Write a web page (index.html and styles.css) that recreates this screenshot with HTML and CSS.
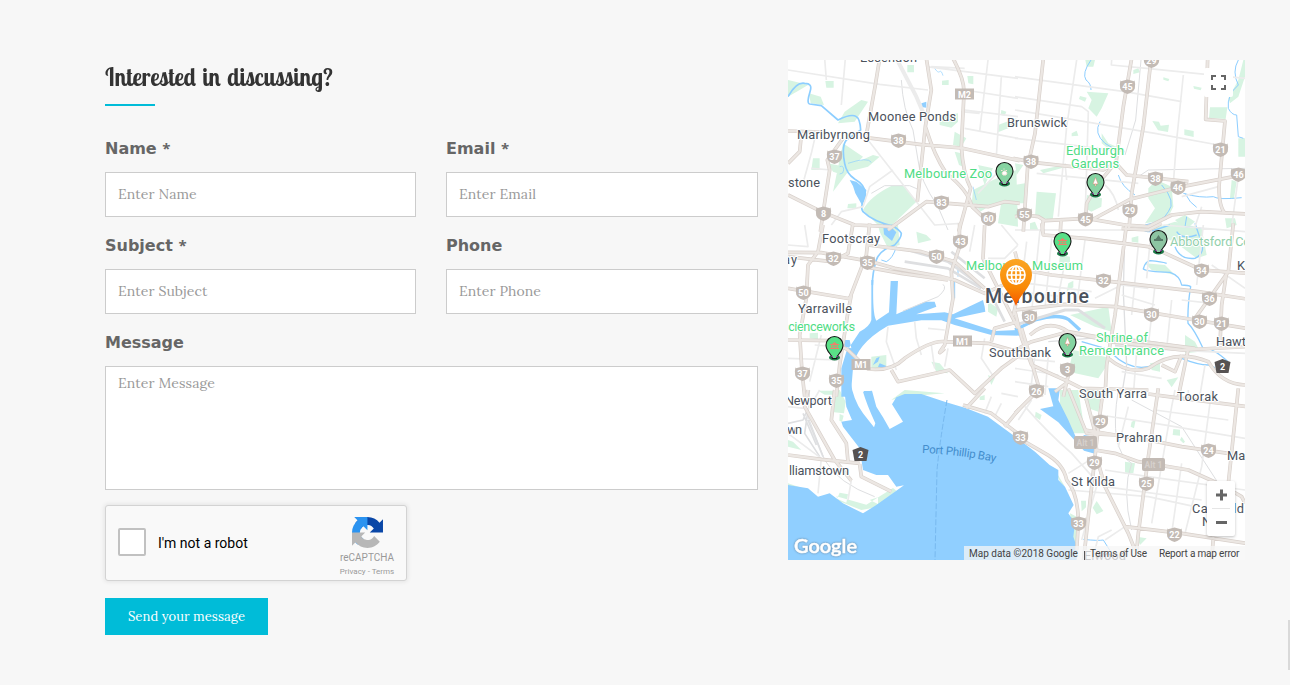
FILE: index.html
```html
<!DOCTYPE html>
<html lang="en">
<head>
<meta charset="utf-8">
<title>Contact</title>
<link rel="stylesheet" href="styles.css">
</head>
<body>
<main class="contact">
<form class="form">
  <h2 class="title"><span class="title-text">Interested in discussing?</span></h2>
  <div class="grid">
    <div class="field"><label for="name">Name <span class="star">*</span></label><input id="name" placeholder="Enter Name"></div>
    <div class="field"><label for="email">Email <span class="star">*</span></label><input id="email" placeholder="Enter Email"></div>
    <div class="field"><label for="subject">Subject <span class="star">*</span></label><input id="subject" placeholder="Enter Subject"></div>
    <div class="field"><label for="phone">Phone</label><input id="phone" placeholder="Enter Phone"></div>
    <div class="field wide"><label for="message">Message</label><textarea id="message" placeholder="Enter Message"></textarea></div>
  </div>
  <div class="captcha">
    <span class="check"></span>
    <span class="robot">I'm not a robot</span>
    <div class="brand">
      <svg width="31" height="31" viewBox="0 0 64 64">
        <path fill="#0a47a7" d="M64 31.955l-.033-1.370V4.687l-7.160 7.160C50.948 4.674 42.033.093 32.050.093c-10.400 0-19.622 4.960-25.458 12.640l11.736 11.860a15.550 15.550 0 0 1 4.754-5.334c2.050-1.600 4.952-2.906 8.968-2.906.485 0 .860.057 1.135.163 4.976.393 9.288 3.140 11.828 7.124l-8.307 8.307L64 31.953"/>
        <path fill="#2b93f0" d="M31.862.094l-1.370.033H4.594l7.160 7.160C4.580 13.147 0 22.060 0 32.046c0 10.400 4.960 19.622 12.640 25.458L24.500 45.768a15.550 15.550 0 0 1-5.334-4.754c-1.600-2.050-2.906-4.952-2.906-8.968 0-.485.057-.860.163-1.135.393-4.976 3.140-9.288 7.124-11.828l8.307 8.307L31.860.095"/>
        <path fill="#b7b7b7" d="M0 32.045v27.268l7.194-7.160c5.860 7.173 14.774 11.754 24.760 11.754 10.400 0 19.622-4.960 25.458-12.640l-11.736-11.860a15.550 15.550 0 0 1-4.754 5.334c-2.050 1.600-4.952 2.906-8.968 2.906-.485 0-.860-.057-1.135-.163-4.976-.393-9.288-3.140-11.828-7.124l8.307-8.307c-10.522.040-22.400.066-27.295-.005"/>
      </svg>
      <span class="brand-name">reCAPTCHA</span>
      <span class="brand-links">Privacy - Terms</span>
    </div>
  </div>
  <button class="send" type="button">Send your message</button>
</form>

<section class="map">
<svg class="map-art" width="457" height="500" viewBox="0 0 1371 1500">
<defs>
  <path id="shield" d="M-6.5-5.2 0-7 6.5-5.2 7-6.3Q8.3-2 7.3 2 6 5.5 0 7.5-6 5.5-7.3 2-8.3-2-7-6.3z"/>
  <path id="pent" d="M0-7.5 8-4.5 6 6.5H-6L-8-4.5z"/>
  <g id="pin"><ellipse cx="0" cy="8.500" rx="5.500" ry="3" fill="#1c7a48"/><path d="M-2 9.500C-2.500 5-8.500 3-8.500-4a8.500 8.500 0 0 1 17 0C8.500 3 2.500 5 2 9.500z" stroke="#151515" stroke-width="1.100"/><circle cx="-2.500" cy="7.500" r=".7" fill="#c23fd0"/><circle cx="2.500" cy="7.500" r=".7" fill="#c23fd0"/></g>
  <linearGradient id="orange" x1="0" y1="0" x2="0" y2="1"><stop offset="0" stop-color="#fba524"/><stop offset=".6" stop-color="#f98a06"/><stop offset="1" stop-color="#f55600"/></linearGradient>
  <g id="r1">
    <path d="M495-5Q530 60 528 100L520 260Q525 340 548 385L512 515"/>
    <path d="M275-5 262 75 235 225M0 213 100 216M235 233 400 254 520 264 695 302M415-5 430 90 412 200 388 425M412 200Q440 290 475 340 540 390 552 440L610 495M300 510 415 425 600 440 650 425 695 430M165 235 118 300 125 330 105 460 97 515M0 405 100 455 200 495 310 500M40 225 35 275 0 310"/>
  </g>
  <g id="r2">
    <path d="M85-5 60 220 38 320 25 515M-5 295 60 308 265 330 300 310M350-5 325 140 303 310 335 345 520 365M408 0 385 200 350 400 342 510M300 310 250 370 215 430 212 480M230 480 345 418 490 382 695 342M578-5 572 178 630 183 612 380Q612 440 630 460M0 470 30 465 70 470 90 482 215 475 330 495 400 500 470 465 560 455 695 462M85 480 82 515M138 480 136 515"/>
  </g>
  <g id="r3">
    <path d="M0 82 100 83 250 110 320 130 460 155 500 165 590 205 690 160M105 0 90 80 60 120 55 220 35 330 42 440 50 515M195-5 180 85 130 110 0 95M0 190 190 222M190 210 180 260 155 420 145 515M245-5 235 90 185 220M515-5 513 70 490 140 495 220 470 360Q440 400 470 370M0 345 130 347 180 375 240 432Q310 440 350 400 430 345 470 350L600 355 690 380M310 435 330 470 485 435 560 505 640 430 695 390M240 60 400 80 500 110 590 190M590 0 585 100 690 310M690 290 620 310 610 350M245 128 340 145 480 165"/>
  </g>
  <g id="r4">
    <path d="M80-5 85 30 210 40 400 65 440 80 560 135 695 145M0 130 110 150 310 172 550 200 695 222M335-5 315 150 300 270 275 420 270 515M0 255 150 238 300 245 540 285 695 310M655-5 640 140 540 280M635 140 620 240 615 360M0 80 20 160-5 270M0 260 20 340 50 420 160 470 200 490 400 495M45 330Q100 280 160 320L290 350 500 375 695 365M0 375 50 350 160 320 270 340 380 350 540 370M280 400Q340 450 400 430 480 370 580 410 620 480 695 480M440 420 480 440 500 390M520 370 490 515M160 450 145 515M20 310 80 515M160 470 120 500M320 10 400 15 440-5"/>
  </g>
  <g id="r5">
    <path d="M60 0 50 50 140 210 190 272M140 0 130 90 175 160 180 215M0 195 100 208 215 220M215 222 220 260 310 305M590-5 535 55M525 45 610 70 695 135M650 110 695 55"/>
  </g>
  <g id="r6">
    <path d="M0 70 60 10M-5 135 90 190Q145 220 155 270 190 310 190 400L185 480M265-5 250 110 240 200 205 515M205-5 240 125 245 185M160-5 215 130 300 135 400 150 500 170 640 190M240 180 300 190 370 215 520 240 620 285 680 320 690 340M430-5 400 200 370 430 365 480M250 220 270 290 340 430 360 480M330 410 500 430 695 460M400 12 500 25 695 50M670-5 640 280M595 440 590 515M210 120 300 135"/>
  </g>
</defs>
<rect width="1371" height="1500" fill="#fff"/>

<g class="park">
  <path d="M0 60 35 68 60 75 35 90 0 110zM63 100l35 10 10 25-40-5zM112 63h25v20h-22zM150 190l50-5 40-60-20-5-50 35zM165 250l60 40-15 15 45-20 20 5-35 30-60 15-45 60zM75 295h20v35H70zM180 432l25-2v15h-27zM225 450Q245 410 310 378L350 378 385 425 310 497 270 495zM358 15h20v22h-20zM462 62l20-2v15h-20zM538 48h18v25l-15-3zM455 170l55-10v25l-20 18-35-8zM500 215l35 20-15 25-25-5zM640 150l15 5-5 12-12-2zM630 195l55-20v20l-55 22zM570 315l45 10-25 50-10-30zM555 390l60-30 70-30 5 170-60-10 10-65-40 15-30 20-20-15zM120 310l50 10-5 25-30-10zM500 275l20 5 5 40-12-5z"/>
  <g transform="translate(681)"><path d="M210-5 240 0 235 20 215 20zM195 108l20 5-5 12-18-8zM215 95l65 5-20 45-15 25-25-25 10-25zM170 220l15-8 5 15-20 2zM260 220l20 30 25 10-20 10-25-20zM355 30l15-5 5 12-20 5zM445 52l18 5-3 7-15-5zM535 78l25 5-3 8-20-5zM412 183l20 2 5 12 25-3-3 22-30-5zM508 208l28 5v18l-28-6zM585 142h52l-5 35-50-3zM640 115l30-55 15-60h10v35l-25 75-25 20zM670 235h20v55h-20zM650 360l15 5-8 50-12 0zM400 385l25-25 45 20 5 60-20 40-65 10 30-45-20-30zM480 480l30-15 30 20-30 25zM216 405l45 10-2 25-30 15-18-10zM65 395l58 5-10 80-53-10zM0 310l25 5-20 30zM0 375l30-5v60H0zM45 490l15-5 10 25H45zM75 330l70-15 10 5-70 20zM630 475h30l5 20-30 10z"/></g>
  <g transform="translate(0 495)"><path d="M270 0 330 0 335 60 300 70 275 20zM385 20l30 10 15 15-40 10zM600 230l30 20-5 25-25-15zM65 325l25-2v20l-25-3zM430 410l25 5 25 30-35-5zM90 497h60v12h-40zM250 395l45-5v40l-45 5zM600 450l20 10-10 20z"/></g>
  <g transform="translate(681 495)"><path d="M165 270 280 245 290 320 240 305zM135 90l30 5v35h-35zM175 375 290 400 250 460 160 440zM160 175l15-8v20l-20 12zM400 15l80-25 80 20 15 80-30 10-60-45zM350 38l20-5v20l-20-3zM390 115l60 5 30 30-70-15zM510 330l30 20 15 30-45 5zM405 415l30-5v30l-25-5zM455 465l35-8-20 30z"/></g>
  <g transform="translate(0 990)"><path d="M140 0h15l18 35-5 35-30-3zM155 72l12 5-5 18-8-3zM310 30 350 0 470 10 350 20zM0 280l60 20 10 20-70-20zM155 308l25 5-5 25-28-12zM150 332l70 28 45-8 60-50-10-8-80 50-90-25zM245 330l25-8v20zM575 20l15-5v15h-15zM0 150l15 5 25 25-40-10z"/></g>
  <g transform="translate(681 990)"><path d="M135 0h55l20 130-40 0-35-70zM195 0h65l-10 65-30-10zM350 95l12-5-5 25-10-5zM475 117l20 2v18l-22-2zM500 140l10 15-5 5-10-10zM330 215l30 5-5 30-25-2zM245 333l20 30-20 10-12-20zM198 332h15v20l-13 12zM365 440l30 5-20 20zM62 65l18 10-5 15-15-10zM120 240l30 50-15-15zM165 370l15 130h10l-5-120z"/></g>
</g>

<g class="water">
  <path d="M185 360 205 365 235 390 232 415 222 435 202 400 195 378z M400 130l15-5v18l-15-2z"/>
  <path transform="translate(0 495)" d="M285-5 303 0 325 22 312 48 288 28z M250 165 250 285Q245 305 215 320L175 380 160 430V515H188L195 430Q200 360 300 302L400 286H460L500 300 610 330 695 332V315L620 318 500 280 592 260 590 245 500 272 590 245 585 225 495 268 470 262 385 268 445 245 440 230 410 230 325 268 330 168H308L303 262 265 287Q253 270 256 165zM265 400l10-5-5 15-15 10zM275 415l20 8-5 10-20-8zM165 345l20 0 5 25-20-5zM228 498h24v12h-24z"/>
  <path transform="translate(0 990)" d="M165-30H187Q195 30 225 70L258 112 262 100Q235 40 225 5L252 2 265 50 285 82 305 117 345 95 312 43 325 22 350 12 400 12 470 35 535 55 600 80 695 150 741 185 785 225 811 240 811 270 831 290 857 345 841 370 861 400 856 440 866 470 866 515H0V285L60 295 90 320 125 310 165 340 225 370 265 345 348 286 325 290 300 255 265 255 225 240 215 175 165 110 160 95 178 92 192 90 175 50z"/>
  <path transform="translate(681 990)" d="M100-5h35l-5 35 30 60 22 50 20 2 5-7 30 5 5 52-35-10-77-85-55-40 40-8z"/>
</g>
<g class="river">
  <path stroke-width="5" d="M0 110Q25 65 50 70 75 70 66 95 55 130 65 132L100 137 150 180Q190 160 205 170 216 175 218 210L175 240Q160 260 170 310 175 340 200 357 240 380 230 415 215 440 225 455 255 485 320 500"/>
  <path stroke-width="2" d="M440 25q10 15 15 10t10 12M180 310q60-20 70-3M155 320q12-5 12 10 0 12-12 12M555 380l10 40"/>
  <g transform="translate(681)"><path stroke-width="3" d="M228 0q-28 40-15 60 15 10 15 30M255 185q-20 35 15 65l25 15M310 345q10 35 50 60M440 375q45 50 20 80-15 30-70 40M640 145q-5-40 30-70-20-40 0-75M640 145q10 20 25 20l5 65 15 5M510 400q15 30 35 42M505 400q50 15 90 10 15 10 85 3M515 470l-5 30 50 5"/></g>
  <g transform="translate(0 495)"><path stroke-width="5" d="M310 0q25 15 30 25 0 15-20 35-45 15-55 45-12 40-12 75"/><path stroke-width="3" d="M325 65q-10 35-30 45l-15-5M510 130v25M500 170v50"/></g>
  <g transform="translate(681 495)"><path stroke-width="4" d="M395 0q-20 20 10 20l60-20M485 20q15 25 60 10M480 65q15 40 60 35 30-15 20-45l-20-60M455 115q-15-5-50-8-15 3-20 25 10 8 80 10 30 10 35 38 20 0 27 5-10 60-8 110 20 20 45 75 25-5 75 40"/><path stroke-width="10" d="M0 315 60 285Q130 265 160 283L195 315"/><path stroke-width="4" d="M200 350 270 370M290 385q60 60 130 35M500 400q50 20 80 20l20 8"/></g>
  <g transform="translate(681 990)"><path stroke-width="3" d="M205 448q45 5 60 2l20 32"/></g>
</g>

<g class="rail">
  <path d="M340 60Q345 150 375 210L390 300Q395 360 450 440L480 510M250 400 290 377H365L395 390"/>
  <g transform="translate(681)"><path d="M378 0 362 180 330 285M370 350 400 330 690 325"/></g>
  <g transform="translate(0 495)"><path d="M345 258 450 215Q480 190 465 178"/><path stroke-width="8" d="M360 75 480 110 590 190M350 110 480 130 580 190M490 80 590 160M600 190 650 290"/></g>
  <g transform="translate(681 495)"><path stroke-width="9" d="M0 300 150 255 190 255 270 310M180 330 320 340 500 365M300 360 520 375"/><path stroke-width="4" d="M330 0 325 200 335 420 320 510M100 350 290 335"/></g>
  <g transform="translate(0 990)"><path d="M65 0 60 80 110 210Q150 280 260 320"/><path stroke-width="5" d="M45 70 85 165M60 60 50 130 95 200M0 100 45 90 60 55M60 90 105 200"/></g>
  <g transform="translate(681 990)"><path d="M310 0Q280 180 350 220 320 300 350 420M350 30 500 110 610 280"/></g>
</g>

<g class="minor">
  <path d="M0 30 275 73 420 90M110-5 115 60M172-5 160 135M415 20 690 55M530 90 690 115M530 150 690 170M530 205 690 235M600 0 575 215M640 50 625 290M240 240 440 495 520 490M315 330 245 380 225 440 160 455 130 495M85 215 70 280 45 370M70 325 130 330M430 20 530 25M575 160 520 155M570 400 640 325M560 430 600 495"/><path stroke-width="12" d="M325-5 385 110 415 180"/>
  <g transform="translate(681)"><path d="M0 50 330 95 500 125M0 110 200 140 220 155 210 480M0 150 420 220 610 255M0 235 330 275M185 0 155 200 130 470M290 0 289 15 395 25 690 55M505 45 485 240 475 370M65 340 370 370M270 375Q300 400 310 450M150 310 155 360M610 380 500 410M0 510 400 510M670 350 650 500M560 440 540 500"/></g>
  <g transform="translate(0 495)"><path d="M300 305 295 350 325 435M380 290 385 340 400 390M0 60 60 65 50 0M80 360 150 365M60 115 50 210M0 400 150 405M65 470 100 330M480 370 470 425M430 360 440 430M590 340 580 400 620 460M690 60 650 100 600 100M640 0 690 60M560 0 545 80M420 310 470 315"/></g>
  <g transform="translate(681 495)"><path d="M35 50 20 170M75 15 50 260M110 40 90 250M150 110 125 240M210 45 185 240M370 60 350 270M410 0 395 160M470 225 455 370M420 180 400 360M240 220 320 180 400 190M0 200 140 215M0 170 230 200M320 210 420 240M565 0 545 180M500 225 590 235M270 350 370 370 690 385M10 400 120 410M0 430 130 450M0 470 100 485M60 390 45 510M100 390 90 510M320 440 440 460M570 420 555 510M365 380 355 510M590 120 690 190M445 0 690 20"/></g>
  <g transform="translate(0 990)"><path d="M0 130 100 205 90 310M95 0 60 60M190 270 180 330M0 50 50 55M610 20 590 70M640 40 620 80M690 20 640 10"/></g>
  <g transform="translate(681 990)"><path d="M30 50Q100 130 170 190L250 280M160 250 240 200M255 75 420 100 690 145M270 240 400 260 690 300M270 290 560 330M160 300 400 320 540 350M340 50 310 170M480 0 470 50 410 400M590 0 560 230 510 430M250 270 200 450M290 420 250 440 235 500M330 410 270 450M420 60 640 90M500 220 470 430M50 30 10 90M440 20 520 25 520 0"/></g>
</g>

<g class="edge"><use href="#r1"/><use href="#r2" x="681"/><use href="#r3" y="495"/><use href="#r4" x="681" y="495"/><use href="#r5" y="990"/><use href="#r6" x="681" y="990"/></g>
<g class="core"><use href="#r1"/><use href="#r2" x="681"/><use href="#r3" y="495"/><use href="#r4" x="681" y="495"/><use href="#r5" y="990"/><use href="#r6" x="681" y="990"/></g>

<g transform="scale(3) translate(-788 -60)">
  <path d="M947 400Q940 440 937 470L935 560" fill="none" stroke="#78b9ef" stroke-dasharray="6 2"/>
  <g class="shields">
    <g transform="translate(898.500 140.500)"><use href="#shield"/><text y="3.500">38</text></g>
    <g transform="translate(834.500 156.500)"><use href="#shield"/><text y="3.500">37</text></g>
    <g transform="translate(823.500 213.500)"><use href="#shield"/><text y="3.500">8</text></g>
    <g transform="translate(941.500 202.500)"><use href="#shield"/><text y="3.500">83</text></g>
    <g transform="translate(988.500 218.500)"><use href="#shield"/><text y="3.500">60</text></g>
    <g transform="translate(1127.500 86.500)"><use href="#shield"/><text y="3.500">45</text></g>
    <g transform="translate(1151.500 60.500)"><use href="#shield"/><text y="3.500">29</text></g>
    <g transform="translate(1031 161.500)"><use href="#shield"/><text y="3.500">38</text></g>
    <g transform="translate(1220.500 149.500)"><use href="#shield"/><text y="3.500">21</text></g>
    <g transform="translate(1155.500 178.500)"><use href="#shield"/><text y="3.500">38</text></g>
    <g transform="translate(1178 187.500)"><use href="#shield"/><text y="3.500">46</text></g>
    <g transform="translate(1238.500 174.500)"><use href="#shield"/><text y="3.500">46</text></g>
    <g transform="translate(1024.500 214.500)"><use href="#shield"/><text y="3.500">55</text></g>
    <g transform="translate(1085.500 219)"><use href="#shield"/><text y="3.500">45</text></g>
    <g transform="translate(1130 210.500)"><use href="#shield"/><text y="3.500">29</text></g>
    <g transform="translate(833.500 258.500)"><use href="#shield"/><text y="3.500">32</text></g>
    <g transform="translate(867.500 262.500)"><use href="#shield"/><text y="3.500">35</text></g>
    <g transform="translate(936.500 256.500)"><use href="#shield"/><text y="3.500">50</text></g>
    <g transform="translate(960.500 241.500)"><use href="#shield"/><text y="3.500">43</text></g>
    <g transform="translate(803.500 292.500)"><use href="#shield"/><text y="3.500">50</text></g>
    <g transform="translate(802.500 373.500)"><use href="#shield"/><text y="3.500">37</text></g>
    <g transform="translate(836.500 380.500)"><use href="#shield"/><text y="3.500">35</text></g>
    <g transform="translate(1103.500 280.500)"><use href="#shield"/><text y="3.500">32</text></g>
    <g transform="translate(1201.500 270.500)"><use href="#shield"/><text y="3.500">34</text></g>
    <g transform="translate(1209.500 298.500)"><use href="#shield"/><text y="3.500">36</text></g>
    <g transform="translate(1151.500 314.500)"><use href="#shield"/><text y="3.500">30</text></g>
    <g transform="translate(1199.500 321.500)"><use href="#shield"/><text y="3.500">30</text></g>
    <g transform="translate(1221.500 323.500)"><use href="#shield"/><text y="3.500">21</text></g>
    <g transform="translate(1029.500 317)"><use href="#shield"/><text y="3.500">30</text></g>
    <g transform="translate(1067.500 369.500)"><use href="#shield"/><text y="3.500">3</text></g>
    <g transform="translate(1036.500 391)"><use href="#shield"/><text y="3.500">26</text></g>
    <g transform="translate(1020.500 437.500)"><use href="#shield"/><text y="3.500">33</text></g>
    <g transform="translate(1100.500 421.500)"><use href="#shield"/><text y="3.500">29</text></g>
    <g transform="translate(1094.500 462.500)"><use href="#shield"/><text y="3.500">29</text></g>
    <g transform="translate(1208.500 450.500)"><use href="#shield"/><text y="3.500">24</text></g>
    <g transform="translate(1146.500 483.500)"><use href="#shield"/><text y="3.500">25</text></g>
    <g transform="translate(1078.500 523.500)"><use href="#shield"/><text y="3.500">33</text></g>
    <g transform="translate(1174.500 534.500)"><use href="#shield"/><text y="3.500">22</text></g>
    <g transform="translate(964.500 94)"><path d="M-9.500-5.500h19v11h-19z"/><text y="3.500">M2</text></g>
    <g transform="translate(962.500 341)"><path d="M-9.500-5.500h19v11h-19z"/><text y="3.500">M1</text></g>
    <g transform="translate(861 364.500)"><path d="M-9.500-5.500h19v11h-19z"/><text y="3.500">M1</text></g>
    <g transform="translate(1085.500 442.500)"><rect x="-11.500" y="-6.500" width="23" height="13" rx="2"/><text class="alt" y="3.500">Alt 1</text></g>
    <g transform="translate(1153.500 464.500)"><rect x="-11.500" y="-6.500" width="23" height="13" rx="2"/><text class="alt" y="3.500">Alt 1</text></g>
    <g class="dark" transform="translate(860.500 454.500)"><use href="#pent"/><text y="3">2</text></g>
    <g class="dark" transform="translate(1222.500 366.500)"><use href="#pent"/><text y="3">2</text></g>
  </g>
  <g class="place">
    <text x="860" y="62.500" textLength="57">Essendon</text>
    <text x="868" y="121.500" textLength="88">Moonee Ponds</text>
    <text x="797" y="139.500" textLength="73">Maribyrnong</text>
    <text x="788" y="187.500" textLength="32">stone</text>
    <text x="1007" y="127.500" textLength="60">Brunswick</text>
    <text x="822" y="243.500" textLength="58">Footscray</text>
    <text x="783" y="264.500" textLength="14">ay</text>
    <text x="798" y="313.500" textLength="54">Yarraville</text>
    <text x="989" y="357.500" textLength="62">Southbank</text>
    <text x="1237" y="270.500">Kew</text>
    <text x="1216" y="346.500">Hawthorn</text>
    <text x="785" y="405.500" textLength="47">Newport</text>
    <text x="787" y="434.500" textLength="15">wn</text>
    <text x="789" y="475.500" textLength="60">lliamstown</text>
    <text x="1079" y="398.500" textLength="68">South Yarra</text>
    <text x="1177" y="401.500" textLength="41">Toorak</text>
    <text x="1116" y="442.500" textLength="46">Prahran</text>
    <text x="1071" y="486.500" textLength="44">St Kilda</text>
    <text x="1227" y="460.500">Malvern</text>
    <text x="1192" y="513.500" textLength="52">Caulfield</text>
    <text x="1202" y="526.500">North</text>
    <text x="1084" y="560.500" textLength="42">Elwood</text>
    <text class="city" x="985" y="303.500" textLength="104">Melbourne</text>
  </g>
  <g class="poi">
    <text x="904" y="178.500" textLength="88">Melbourne Zoo</text>
    <text x="1066" y="155.500" textLength="58">Edinburgh</text>
    <text x="1071" y="168.500" textLength="48">Gardens</text>
    <text x="966" y="270.500" textLength="117">Melbourne Museum</text>
    <text x="782" y="331.500" textLength="73">scienceworks</text>
    <text x="1096" y="342.500" textLength="52">Shrine of</text>
    <text x="1079" y="355.500" textLength="85">Remembrance</text>
    <text class="faded" x="1170" y="246.500" textLength="111">Abbotsford Convent</text>
  </g>
  <path id="bay" d="M922 453Q965 455 999 463" fill="none"/>
  <text class="bay"><textPath href="#bay" textLength="74">Port Phillip Bay</textPath></text>

  <use href="#pin" x="1004.500" y="175" fill="#86d4a2"/><path d="M1002 173q2.500-4 5 0l-1 2h-3zM1001 170.500h1.500m1-1.500h1m1 1.500h1.500" fill="#fff" stroke="#f6e6d9"/>
  <use href="#pin" x="1095.500" y="186" fill="#86d4a2"/><path d="M1095.500 177.500l2.500 6.500h-5zM1095 184h1v2h-1z" fill="#fff" stroke="#e77b63" stroke-width=".4"/>
  <use href="#pin" x="1062.500" y="245" fill="#59e087"/><path d="M1058 241h9v-1h-2l-2.500-2-2.500 2h-2zM1059 241.500h1.500v2h-1.500zM1061.500 241.500h2v2h-2zM1064.500 241.500h1.500v2h-1.500zM1058 244h9v1h-9z" fill="#ee806b"/>
  <use href="#pin" x="1158.500" y="243" fill="#8dc5a2"/><path d="M1154 241h9v-2h-1.500l-1-1-2-3-2 3-1 1h-1.500z" fill="#587c69"/>
  <use href="#pin" x="834.500" y="349" fill="#59e087"/><path d="M830 345h9v-1h-2l-2.500-2-2.500 2h-2zM831 345.500h1.500v2h-1.500zM833.500 345.500h2v2h-2zM836.500 345.500h1.500v2h-1.500zM830 348h9v1h-9z" fill="#ee806b"/>
  <use href="#pin" x="1067.500" y="346" fill="#86d4a2"/><path d="M1067.500 337.500l2.500 6.500h-5zM1067 344h1v2h-1z" fill="#fff" stroke="#e77b63" stroke-width=".4"/>

  <path d="M1016 306C1012 294 1000 287 1000 275a16 16 0 0 1 32 0C1032 287 1020 294 1016 306z" fill="url(#orange)"/>
  <g fill="none" stroke="#fff" stroke-width="1.700"><circle cx="1016" cy="275" r="9"/><ellipse cx="1016" cy="275" rx="4.500" ry="9"/><path d="M1016 266v18M1007 275h18M1009 270.500h14M1009 279.500h14"/></g>
  <text class="google" x="794" y="553" textLength="63" lengthAdjust="spacingAndGlyphs">Google</text>
</g>
</svg>
<div class="full"><svg width="15" height="15" viewBox="0 0 15 15"><path d="M1 5V1h4M10 1h4v4M14 10v4h-4M5 14H1v-4" fill="none" stroke="#666" stroke-width="2"/></svg></div>
<div class="zoom"><svg width="28" height="55" viewBox="0 0 28 55"><path d="M14.500 8.500v11M9 14h11M9 41.500h11" stroke="#666" stroke-width="3"/><path d="M5 27.500h18" stroke="#e6e6e6"/></svg></div>
<div class="legal"><span class="data">Map data ©2018 Google</span><span class="bar"></span><span class="terms">Terms of Use</span><span class="report">Report a map error</span></div>
</section>
</main>
<span class="scroll"></span>
</body>
</html>
```
FILE: styles.css
```css
* { box-sizing: border-box; }
body { margin: 0; height: 685px; overflow: hidden; background: #f7f7f7; }
.contact { display: flex; gap: 30px; padding: 60px 45px 0 105px; }
.form { width: 653px; }
.title { margin: 0; height: 46px; }
.title::after { content: ""; display: block; width: 50px; height: 2px; background: #00bcd8; margin-top: 10px; }
.title-text { display: block; height: 34px; font: bold 26px/34px "Lobster Two", "Lobster", serif; word-spacing: 1.5px; transform: scaleX(.9); transform-origin: left; color: #333; white-space: nowrap; }
.grid { display: grid; grid-template-columns: 311px 312px; column-gap: 30px; margin-top: 30px; }
.field { display: flex; flex-direction: column; height: 97px; }
.field label { height: 36px; font: bold 16px/25px "DejaVu Sans", sans-serif; color: #666; }
.star { font-family: "Open Sans", sans-serif; font-size: 15px; line-height: 20px; }
.wide { grid-column: 1 / 3; height: 160px; }
input, textarea { display: block; width: 100%; height: 45px; margin: 0; padding: 0 12px 2px; border: 1px solid #ccc; border-radius: 0; background: #fff; font: 14px "Lora", "Liberation Serif", serif; letter-spacing: .1px; resize: none; }
textarea { height: 124px; padding-top: 7px; }
::placeholder { color: #999; opacity: 1; }
.captcha { display: flex; align-items: center; width: 302px; height: 76px; margin-top: 15px; padding-left: 12px; border: 1px solid #d3d3d3; border-radius: 3px; background: #f9f9f9; box-shadow: 0 0 4px 1px rgba(0,0,0,.08); font-family: Roboto, sans-serif; }
.check { width: 28px; height: 28px; margin-top: -2px; border: 2px solid #c1c1c1; border-radius: 2px; background: #fff; }
.robot { width: 179px; margin-left: 12px; font-size: 14px; color: #000; }
.brand { display: flex; flex-direction: column; align-items: center; width: 60px; height: 66px; padding-top: 7px; color: #999; white-space: nowrap; }
.brand svg { flex: none; }
.brand-name { font-size: 10px; line-height: 14px; margin-top: 3px; height: 15px; }
.brand-links { font: 8px/13px Roboto, sans-serif; }
.send { display: block; width: 163px; height: 37px; margin-top: 17px; padding: 0; border: 0; background: #00bcd8; color: #fff; font: 13px "Lora", "Liberation Serif", serif; letter-spacing: .05px; }
.map { position: relative; width: 457px; height: 500px; overflow: hidden; }
.map-art { display: block; font-family: Roboto, sans-serif; }
.park { fill: #d7f4e2; }
.water { fill: #90cfff; }
.river, .rail, .minor, .edge, .core { fill: none; stroke-linejoin: round; }
.river { stroke: #8dceff; }
.rail { stroke: #dedfe1; stroke-width: 3px; }
.minor { stroke: #ececec; stroke-width: 5px; }
.edge { stroke: #d8d0cb; stroke-width: 11px; }
.core { stroke: #ece7e3; stroke-width: 7px; }
.shields { fill: #c3bbb5; }
.shields text { font-size: 9px; font-weight: 700; fill: #fff; text-anchor: middle; }
.shields .alt { fill: #d6d0cc; font-size: 8.5px; }
.shields .dark { fill: #565252; }
.place, .poi { transform: translateY(-.1px); }
.place text { font-size: 12.8px; fill: #4b525c; stroke: #fff; stroke-width: 2px; stroke-linejoin: round; paint-order: stroke; }
.place .city { font-size: 19.5px; font-weight: 500; }
.poi text { font-size: 12.8px; fill: #4fdc84; stroke: #fff; stroke-width: 2px; paint-order: stroke; }
.poi .faded { fill: #92cfab; }
.bay { font-size: 11.5px; fill: #438dcc; }
.google { font: 600 19px Lato, sans-serif; fill: #fff; stroke: #fff; stroke-width: .5px; filter: drop-shadow(0 0 1px #6685a0); }
.full { position: absolute; right: 12px; top: 8px; width: 29px; height: 29px; padding: 7px; background: #fff; border-radius: 2px; }
.full svg { display: block; }
.zoom { position: absolute; right: 10px; top: 421px; width: 28px; height: 55px; background: #fff; border-radius: 2px; box-shadow: 0 1px 3px rgba(0,0,0,.25); }
.legal { position: absolute; right: 0; bottom: 0; display: flex; width: 281px; height: 14px; padding-left: 5px; background: rgba(245,245,245,.75); color: #444; font: 10px/15px Roboto, sans-serif; white-space: nowrap; }
.data { width: 115px; }
.bar { width: 1px; height: 9px; margin-top: 5px; background: #555; }
.terms { width: 69px; padding-left: 5px; letter-spacing: -.2px; }
.report { padding-left: 5px; letter-spacing: -.18px; }
.scroll { position: absolute; right: 0; top: 620px; width: 2px; height: 50px; background: #d9d9d9; }
```
